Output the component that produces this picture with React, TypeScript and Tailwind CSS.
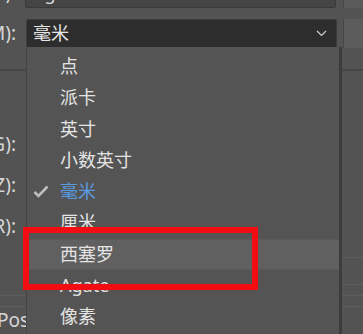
import React from "react";

const items = ["点", "派卡", "英寸", "小数英寸", "毫米", "厘米", "西塞罗", "Agate", "像素"];

function Label({ text }: { text: string }) {
  return (
    <div className="w-[16px] shrink-0 overflow-hidden flex justify-end whitespace-nowrap text-[19px] leading-none text-[#d6d6d6]">
      {text}
    </div>
  );
}

export default function App() {
  return (
    <div
      className="relative w-[363px] h-[334px] overflow-hidden bg-[#535353]"
      style={{ fontFamily: '"Noto Sans", "Noto Sans CJK SC", sans-serif' }}
    >
      {/* underlying form */}
      <div className="flex flex-col">
        {/* row 1 (cut at top) */}
        <div className="flex items-center h-[30px] mt-[-22px]">
          <Label text="(L):" />
          <div className="ml-[9px] w-[313px] h-[30px] bg-[#454545] border border-[#3a3a3a] rounded-[2px] flex items-center pl-[7px] text-[18px] text-[#dcdcdc]">
            Agate
          </div>
          <div className="ml-[7px] w-[20px] h-[30px] bg-[#5a5a5a] border-l border-[#464646]" />
        </div>
        {/* row 2 select */}
        <div className="flex items-center h-[29px] mt-[11px]">
          <Label text="(M):" />
          <div className="ml-[10px] w-[312px] h-[29px] bg-[#2d2d2d] border border-[#3d3d3d] rounded-[2px] flex items-center justify-between pl-[6px] pr-[9px] text-[18px] text-[#e6e6e6]">
            <span>毫米</span>
            <svg width="11" height="7" viewBox="0 0 11 7" fill="none">
              <path d="M1 1l4.5 4.5L10 1" stroke="#cfcfcf" strokeWidth="1.2" />
            </svg>
          </div>
          <div className="ml-[6px] w-[20px] h-[29px] bg-[#5c5c5c] border-l border-[#464646]" />
        </div>
        <div className="mt-[21px] h-[2px] bg-[#474747]" />
        <div className="flex flex-col mt-[64px] gap-[23px]">
          <div className="flex h-[18px] items-center"><Label text="(G):" /></div>
          <div className="flex h-[18px] items-center"><Label text="(Z):" /></div>
          <div className="flex h-[18px] items-center"><Label text="(R):" /></div>
        </div>
        <div className="mt-[60px] h-[1px] bg-[#5e5e5e]" />
        <div className="mt-[10px] h-[1px] bg-[#5e5e5e]" />
        <div className="mt-[4px] flex text-[19px] leading-none text-[#d6d6d6] whitespace-nowrap ml-[-3px]">
          Pos
        </div>
      </div>

      {/* right column lines */}
      <div className="absolute left-[343px] top-[257px] w-[20px] h-[1px] bg-[#5e5e5e]" />
      <div className="absolute left-[343px] top-[284px] w-[20px] h-[1px] bg-[#5e5e5e]" />

      {/* dropdown menu */}
      <div className="absolute left-[26px] top-[47px] w-[316px] h-[300px] bg-[#545454] border-l border-[#444444] border-r-[3px] border-r-[#3c3c3c] pt-[4px]">
        {items.map((it, i) => {
          const selected = it === "毫米";
          const hover = it === "西塞罗";
          return (
            <div
              key={it}
              className={`flex items-center h-[31.25px] text-[18px] ${
                hover ? "bg-[#606060] border-y border-[#5a5a5a]" : ""
              } ${selected ? "text-[#5b9be0]" : "text-[#e4e4e4]"}`}
            >
              <div className="w-[33px] shrink-0 flex justify-start pl-[6px]">
                {selected && (
                  <svg width="16" height="13" viewBox="0 0 16 13" fill="none">
                    <path d="M1.5 7l4 4L14.5 1.5" stroke="#bdbdbd" strokeWidth="2.6" />
                  </svg>
                )}
              </div>
              <span>{it}</span>
            </div>
          );
        })}
      </div>

      {/* red annotation box */}
      <div className="absolute left-[23px] top-[227px] w-[235px] h-[63px] border-[6px] border-[#f20d12]" />
    </div>
  );
}
